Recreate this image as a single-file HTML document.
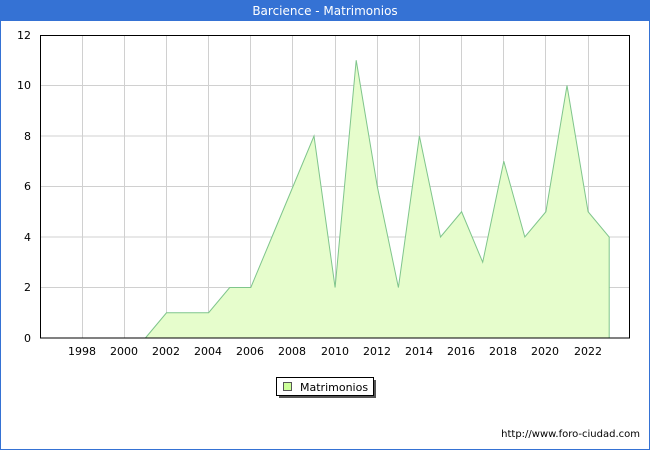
<!DOCTYPE html><html><head><style>body{margin:0;width:650px;height:450px;overflow:hidden;background:#fff;font-family:"DejaVu Sans","Liberation Sans",sans-serif}</style></head><body>
<svg width="650" height="450" xmlns="http://www.w3.org/2000/svg" font-family="DejaVu Sans, Liberation Sans, sans-serif">
<rect x="0.5" y="0.5" width="649" height="449" fill="#fff" stroke="#3572d4"/>
<rect x="0" y="0" width="650" height="21" fill="#3572d4"/>
<text x="325" y="15" font-size="12" fill="#fff" text-anchor="middle">Barcience - Matrimonios</text>
<g stroke="#d0d0d0" stroke-width="1">
<line x1="40" y1="287.5" x2="630" y2="287.5"/><line x1="40" y1="237" x2="630" y2="237"/><line x1="40" y1="186.5" x2="630" y2="186.5"/><line x1="40" y1="136" x2="630" y2="136"/><line x1="40" y1="85.5" x2="630" y2="85.5"/>
<line x1="82.5" y1="35" x2="82.5" y2="338"/><line x1="124.5" y1="35" x2="124.5" y2="338"/><line x1="166.5" y1="35" x2="166.5" y2="338"/><line x1="208.5" y1="35" x2="208.5" y2="338"/><line x1="250.5" y1="35" x2="250.5" y2="338"/><line x1="292.5" y1="35" x2="292.5" y2="338"/><line x1="335.5" y1="35" x2="335.5" y2="338"/><line x1="377.5" y1="35" x2="377.5" y2="338"/><line x1="419.5" y1="35" x2="419.5" y2="338"/><line x1="461.5" y1="35" x2="461.5" y2="338"/><line x1="503.5" y1="35" x2="503.5" y2="338"/><line x1="545.5" y1="35" x2="545.5" y2="338"/><line x1="588.5" y1="35" x2="588.5" y2="338"/>
</g>
<polygon fill="#e6fdcc" stroke="#7fc58c" stroke-width="1" points="145.4,338 166.5,312.75 187.6,312.75 208.6,312.75 229.7,287.5 250.8,287.5 271.9,237 293,186.5 314,136 335.1,287.5 356.2,60.25 377.3,186.5 398.4,287.5 419.4,136 440.5,237 461.6,211.75 482.7,262.25 503.8,161.25 524.8,237 545.9,211.75 567,85.5 588.1,211.75 609.2,237 609.2,338"/>
<rect x="40.5" y="35.5" width="589" height="302.5" fill="none" stroke="#000"/>
<g font-size="11" fill="#000" text-anchor="end">
<text x="31" y="342">0</text><text x="31" y="291">2</text><text x="31" y="241">4</text><text x="31" y="190">6</text><text x="31" y="140">8</text><text x="31" y="89">10</text><text x="31" y="39">12</text>
</g>
<g font-size="11" fill="#000" text-anchor="middle">
<text x="82" y="355">1998</text><text x="124" y="355">2000</text><text x="166" y="355">2002</text><text x="208" y="355">2004</text><text x="250" y="355">2006</text><text x="292" y="355">2008</text><text x="335" y="355">2010</text><text x="377" y="355">2012</text><text x="419" y="355">2014</text><text x="461" y="355">2016</text><text x="503" y="355">2018</text><text x="545" y="355">2020</text><text x="588" y="355">2022</text>
</g>
<rect x="279" y="380" width="97" height="18" fill="#555"/>
<rect x="276.5" y="377.5" width="97" height="18" fill="#fff" stroke="#000"/>
<rect x="283.5" y="382.5" width="8" height="8" fill="#ccff99" stroke="#555"/>
<text x="300" y="391" font-size="11" fill="#000">Matrimonios</text>
<text x="640" y="437" font-size="10" fill="#000" text-anchor="end">http://www.foro-ciudad.com</text>
</svg>
</body></html>
